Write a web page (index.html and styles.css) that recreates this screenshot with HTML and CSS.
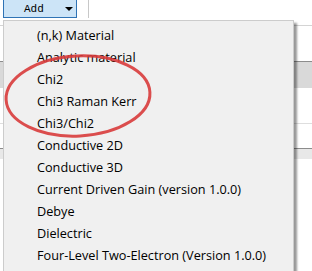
FILE: index.html
```html
<!DOCTYPE html>
<html lang="en">
<head>
  <meta charset="UTF-8">
  <title>Add material</title>
  <link rel="stylesheet" href="styles.css">
</head>
<body>
  <div class="page">
    <div class="toolbar">
      <button class="add-btn" type="button">
        <span class="add-label">Add</span>
        <span class="add-arrow"></span>
      </button>
      <div class="toolbar-sep"></div>
    </div>
    <div class="grid">
      <div class="grid-row row-top"></div>
      <div class="grid-row row-head"></div>
      <div class="grid-row row-body"></div>
      <div class="grid-row row-light"></div>
      <div class="grid-row row-head2"></div>
      <div class="grid-row row-rest"></div>
    </div>

    <ul class="menu">
      <li>(n,k) Material</li>
      <li>Analytic material</li>
      <li>Chi2</li>
      <li>Chi3 Raman Kerr</li>
      <li>Chi3/Chi2</li>
      <li>Conductive 2D</li>
      <li>Conductive 3D</li>
      <li>Current Driven Gain (version 1.0.0)</li>
      <li>Debye</li>
      <li>Dielectric</li>
      <li>Four-Level Two-Electron (Version 1.0.0)</li>
    </ul>

    <!-- hand-drawn highlight over the chi items -->
    <svg class="mark" width="312" height="271" viewBox="0 0 312 271">
      <ellipse cx="78" cy="96" rx="72" ry="40" transform="rotate(-3 78 96)"
               fill="none" stroke="#d83b3b" stroke-width="3" stroke-opacity="0.9"/>
    </svg>
  </div>
</body>
</html>
```

FILE: styles.css
```css
body {
  margin: 0;
  padding: 0;
  background: #fff;
  font-family: "Open Sans", "Noto Sans", sans-serif;
}
.page {
  position: relative;
  width: 312px;
  height: 271px;
  overflow: hidden;
}
.toolbar {
  display: flex;
  align-items: flex-start;
  height: 20px;
}
.add-btn {
  display: flex;
  align-items: center;
  box-sizing: border-box;
  width: 74px;
  height: 20px;
  margin: -2px 0 0 3px;
  padding: 2px 0 0 20px;
  background: #cce4f7;
  border: 1px solid #2f73b5;
  font-family: "Liberation Mono", "DejaVu Sans Mono", monospace;
  font-size: 11px;
  color: #000;
}
.add-label {
  width: 41px;
  text-align: left;
}
.add-arrow {
  width: 0;
  height: 0;
  border-left: 4px solid transparent;
  border-right: 4px solid transparent;
  border-top: 4px solid #000;
}
.toolbar-sep {
  width: 1px;
  height: 18px;
  margin-left: 11px;
  background: #c8c8c8;
}
.grid-row {
  box-sizing: border-box;
}
.row-top {
  height: 6px;
  border-bottom: 1px solid #d4d4d4;
}
.row-head {
  height: 36px;
  border-bottom: 1px solid #8c8c8c;
}
.row-body {
  height: 26px;
  background: #d9d9d9;
}
.row-light {
  height: 36px;
  border-bottom: 1px solid #dedede;
}
.row-head2 {
  height: 25px;
  border-bottom: 1px solid #8c8c8c;
}
.row-rest {
  height: 10px;
  background: #e8e8e8;
}
.menu {
  position: absolute;
  left: 3px;
  top: 20px;
  width: 291px;
  height: 260px;
  box-sizing: border-box;
  margin: 0;
  padding: 3px 0 0;
  list-style: none;
  background: #f0f0f0;
  border: 1px solid #cccccc;
  box-shadow: 3px 3px 2px rgba(0, 0, 0, 0.4);
}
.menu li {
  height: 22px;
  line-height: 22px;
  padding-left: 33px;
  font-size: 12.7px;
  color: #000;
  white-space: nowrap;
}
.mark {
  position: absolute;
  left: 0;
  top: 0;
  pointer-events: none;
}
```
